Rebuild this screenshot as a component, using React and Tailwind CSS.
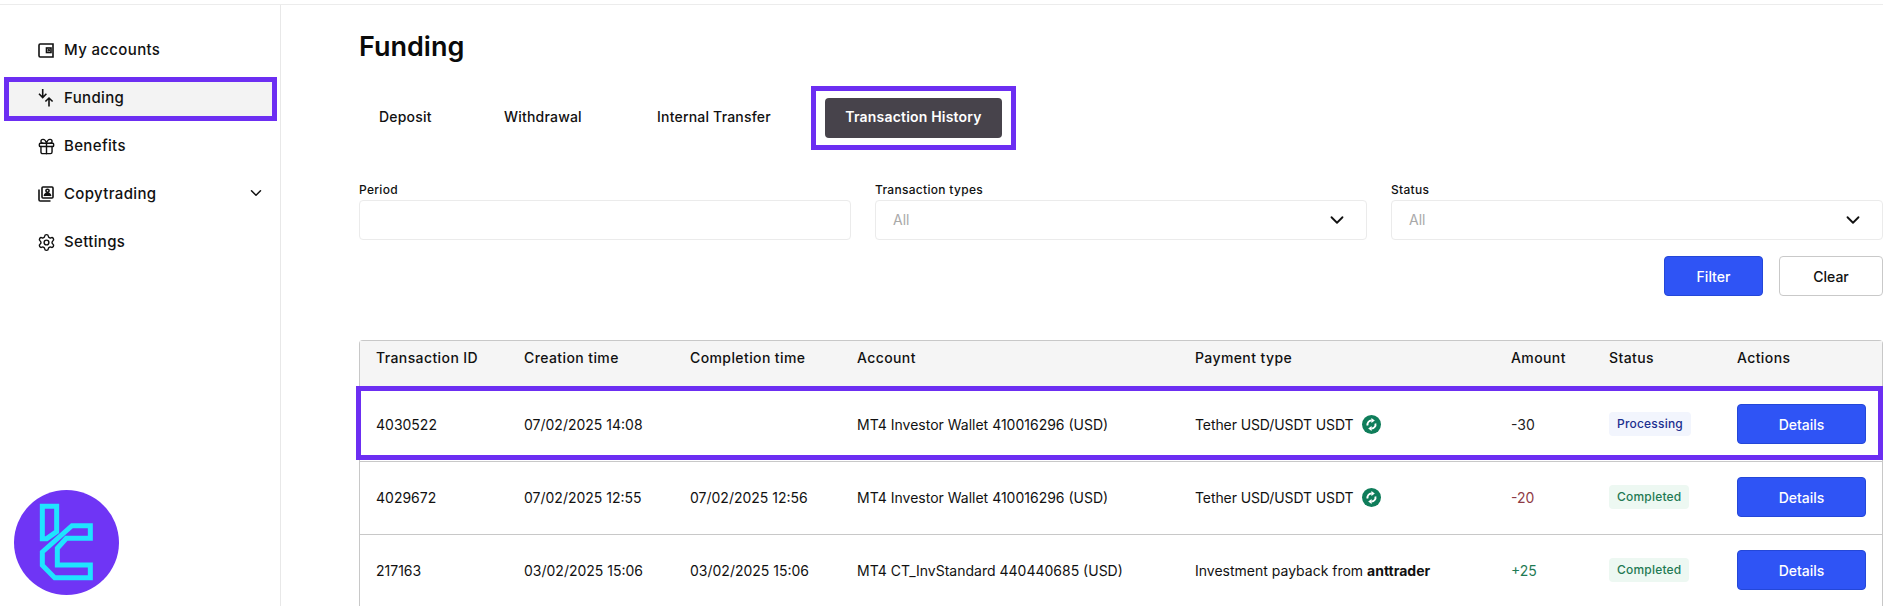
import React from 'react';
import { Gift, Settings, ChevronDown } from 'lucide-react';

const GRID = 'grid grid-cols-[148px_166px_167px_338px_316px_98px_128px_1fr] items-center pl-4';

const rows = [
  { id: '4030522', created: '07/02/2025 14:08', done: '', account: 'MT4 Investor Wallet 410016296 (USD)', tether: true, amount: '-30', amountColor: 'text-[#222222]', status: 'Processing', marked: true },
  { id: '4029672', created: '07/02/2025 12:55', done: '07/02/2025 12:56', account: 'MT4 Investor Wallet 410016296 (USD)', tether: true, amount: '-20', amountColor: 'text-[#8f3b46]', status: 'Completed' },
  { id: '217163', created: '03/02/2025 15:06', done: '03/02/2025 15:06', account: 'MT4 CT_InvStandard 440440685 (USD)', amount: '+25', amountColor: 'text-[#1f7a54]', status: 'Completed' },
];

function WalletIcon() {
  return (
    <svg width="16" height="15" viewBox="0 0 16 15" fill="none" stroke="#111" strokeWidth="1.6">
      <path d="M15 1H2.2C1.5 1 1 1.5 1 2.2v10.6c0 .7.5 1.2 1.2 1.2H15z" />
      <rect x="8.5" y="5" width="4.5" height="4.5" />
      <circle cx="10.8" cy="7.3" r=".5" fill="#111" />
    </svg>
  );
}

function FundingIcon() {
  return (
    <svg width="16" height="18" viewBox="0 0 16 18" fill="none" stroke="#111" strokeWidth="1.6">
      <path d="M4.7 0v8.5M1 4.8l3.7 3.7 3.7-3.7" />
      <path d="M11 17.5V9M7.4 12.5L11 9l3.6 3.5" />
    </svg>
  );
}

function CopyIcon() {
  return (
    <svg width="16" height="16" viewBox="0 0 16 16" fill="none" stroke="#111" strokeWidth="1.6">
      <path d="M1 3.5v10.2c0 .7.6 1.3 1.3 1.3h10.2" />
      <rect x="4" y="1" width="11" height="11" rx="1" />
      <circle cx="9.5" cy="4.8" r="1.6" />
      <path d="M6.3 10c.5-1.8 1.7-2.6 3.2-2.6s2.7.8 3.2 2.6" fill="#111" />
    </svg>
  );
}

function TetherIcon() {
  return (
    <svg width="19" height="19" viewBox="0 0 19 19" className="ml-2 shrink-0">
      <circle cx="9.5" cy="9.5" r="9.5" fill="#0f7d5a" />
      <path d="M5.6 10.5A4 4 0 0 1 9.6 5.5" fill="none" stroke="#fff" strokeWidth="1.9" />
      <path d="M13.4 8.5A4 4 0 0 1 9.4 13.5" fill="none" stroke="#fff" strokeWidth="1.9" />
      <path d="M9.4 3l3.4 2.5-3.4 2.5z" fill="#fff" />
      <path d="M9.6 16l-3.4-2.5 3.4-2.5z" fill="#fff" />
    </svg>
  );
}

function Logo() {
  return (
    <svg width="105" height="105" viewBox="42 60 315 315">
      <circle cx="199.5" cy="217.5" r="157.5" fill="#6f35f5" />
      <g fill="none" stroke="#1fe4ff" strokeWidth="15">
        <path d="M127 109h43v76l-30 21h-13z" />
        <path d="M271 167h-55l-89 79v40l37 37h107v-38h-99v-50l27-30h72z" />
      </g>
    </svg>
  );
}

function NavItem({ icon, label, chevron, active }) {
  return (
    <div className="relative flex h-12 items-center">
      {active && <div className="absolute left-1 top-[3px] h-[44px] w-[273px] border-[5px] border-[#6c2ef2] bg-[#f3f3f3]" />}
      <div className="relative flex w-[64px] justify-end pr-2">
        <span className="flex w-5 items-center justify-center">{icon}</span>
      </div>
      <span className="relative text-[15px] font-medium tracking-[0.35px] text-[#111111]">{label}</span>
      {chevron && <ChevronDown className="absolute left-[247px] top-[14px] h-[18px] w-[18px] text-[#111111]" strokeWidth={2} />}
    </div>
  );
}

function Field({ label, value, chevron }) {
  return (
    <div className="flex-1">
      <div className="mb-[2px] pt-px text-[12px] font-medium leading-[17px] tracking-[0.3px] text-[#111111]">{label}</div>
      <div className="flex h-10 items-center justify-between rounded border border-[#ebebeb] pb-px pl-[17px] pr-[18px]">
        <span className="text-[14px] text-[#a9a9a9]">{value}</span>
        {chevron && <ChevronDown className="h-[22px] w-[22px] text-[#111111]" strokeWidth={2} />}
      </div>
    </div>
  );
}

function Badge({ status }) {
  const processing = status === 'Processing';
  return (
    <span className={`inline-block rounded px-2 py-[3px] text-[12px] font-medium leading-[18px] tracking-[0.2px] ${processing ? 'bg-[#f2f5fd] text-[#1c2f8f]' : 'bg-[#edf8f2] text-[#1f7a54]'}`}>
      {status}
    </span>
  );
}

export default function App() {
  return (
    <div className="h-[606px] w-[1883px] overflow-hidden bg-white font-['Inter','Liberation_Sans',sans-serif]">
      <div className="h-[5px] border-b border-[#ececec]" />
      <div className="flex h-[601px]">
        <aside className="flex w-[281px] shrink-0 flex-col justify-between border-r border-[#e8e8e8] pb-[11px] pl-0 pt-[21px]">
          <nav>
            <NavItem icon={<WalletIcon />} label="My accounts" />
            <NavItem icon={<FundingIcon />} label="Funding" active />
            <NavItem icon={<Gift size={19} color="#111" strokeWidth={1.8} />} label="Benefits" />
            <NavItem icon={<CopyIcon />} label="Copytrading" chevron />
            <NavItem icon={<Settings size={19} color="#111" strokeWidth={1.8} />} label="Settings" />
          </nav>
          <div className="pl-[14px]">
            <Logo />
          </div>
        </aside>

        <main className="flex-1 pl-[78px]">
          <h1 className="mt-[26px] text-[27px] font-semibold leading-[32px] text-[#0a0a0a]">Funding</h1>

          <div className="mt-[35px] flex h-10 items-center text-[14px] font-medium tracking-[0.2px] text-[#111111]">
            <span className="mb-[3px] ml-5 w-[125px]">Deposit</span>
            <span className="mb-[3px] w-[153px]">Withdrawal</span>
            <span className="mb-[3px] w-[168px]">Internal Transfer</span>
            <div className="relative">
              <div className="flex h-10 w-[177px] items-center justify-center rounded bg-[#47434b] pb-[3px] font-semibold text-white">
                Transaction History
              </div>
              <div className="pointer-events-none absolute -inset-x-[14px] -inset-y-3 border-[5px] border-[#6c2ef2]" />
            </div>
          </div>

          <div className="mt-[42px] flex gap-6">
            <Field label="Period" />
            <Field label="Transaction types" value="All" chevron />
            <Field label="Status" value="All" chevron />
          </div>

          <div className="mt-4 flex justify-end gap-4 text-[14px] font-medium">
            <button className="h-10 w-[99px] rounded border border-[#2447d8] bg-[#2f54f5] text-white">Filter</button>
            <button className="h-10 w-[104px] rounded border border-[#c9c9c9] text-[#111111]">Clear</button>
          </div>

          <div className="mt-[44px] rounded-t border border-b-0 border-[#c8c8c8] text-[14px] text-[#111111]">
            <div className={`${GRID} h-[48px] border-b border-[#c8c8c8] bg-[#f5f5f5] pb-[14px] font-medium tracking-[0.4px]`}>
              <span>Transaction ID</span>
              <span>Creation time</span>
              <span>Completion time</span>
              <span>Account</span>
              <span>Payment type</span>
              <span>Amount</span>
              <span>Status</span>
              <span>Actions</span>
            </div>
            {rows.map((row) => (
              <div key={row.id} className={`${GRID} relative h-[73px] border-b border-[#c8c8c8] pb-[2px]`}>
                <span>{row.id}</span>
                <span>{row.created}</span>
                <span>{row.done}</span>
                <span>{row.account}</span>
                <span className="flex items-center">
                  {row.tether ? (
                    <>
                      <span className="tracking-[-0.1px]">Tether USD/USDT USDT</span>
                      <TetherIcon />
                    </>
                  ) : (
                    <span>
                      Investment payback from <b className="font-bold">anttrader</b>
                    </span>
                  )}
                </span>
                <span className={row.amountColor}>{row.amount}</span>
                <span>
                  <Badge status={row.status} />
                </span>
                <span>
                  <button className="h-10 w-[129px] rounded border border-[#2447d8] bg-[#2f54f5] font-medium text-white">Details</button>
                </span>
                {row.marked && <div className="pointer-events-none absolute -left-1 -right-[1px] -top-[3px] bottom-[1px] border-[5px] border-[#6c2ef2]" />}
              </div>
            ))}
          </div>
        </main>
      </div>
    </div>
  );
}
